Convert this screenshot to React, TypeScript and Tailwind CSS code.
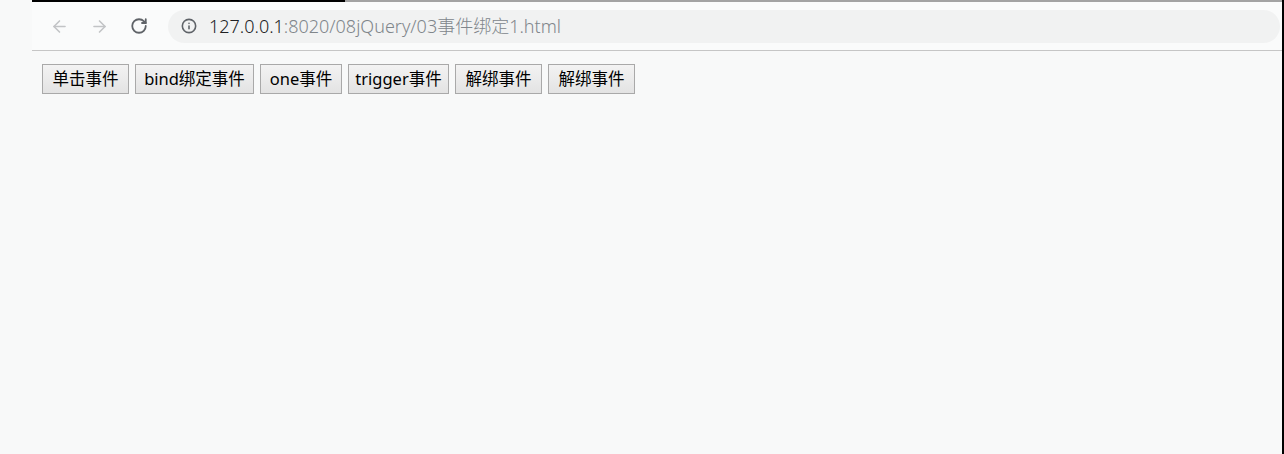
import React from "react";
import { ArrowLeft, ArrowRight, RotateCw, Info } from "lucide-react";

const buttons = [
  { label: "单击事件", w: "w-[87px]" },
  { label: "bind绑定事件", w: "w-[119px]" },
  { label: "one事件", w: "w-[82px]" },
  { label: "trigger事件", w: "w-[101px]" },
  { label: "解绑事件", w: "w-[87px]" },
  { label: "解绑事件", w: "w-[87px]" },
];

export default function App() {
  return (
    <div className="flex h-[454px] w-[1284px] overflow-hidden bg-[#f8f9f9] font-['Noto_Sans','Noto_Sans_CJK_SC',sans-serif]">
      <div className="w-[32px] shrink-0" />
      <div className="flex flex-1 flex-col">
        {/* tab strip edge */}
        <div className="flex h-[2px]">
          <div className="w-[313px] bg-black" />
          <div className="flex-1 bg-[#a3a3a3]" />
        </div>
        {/* toolbar */}
        <div className="flex h-[49px] items-center border-b border-[#c6c6c6] bg-[#fafbfb]">
          <div className="flex w-[136px] items-center pl-[18px]">
            <ArrowLeft size={19} strokeWidth={2} className="text-[#c2c4c6]" />
            <div className="w-[21px]" />
            <ArrowRight size={19} strokeWidth={2} className="text-[#c2c4c6]" />
            <div className="w-[21px]" />
            <RotateCw size={18} strokeWidth={2.4} className="text-[#5f6368]" />
          </div>
          <div className="mr-[2px] flex h-[33px] flex-1 items-center rounded-full bg-[#f1f2f2] pl-[13px]">
            <Info size={16} strokeWidth={2.4} className="text-[#5f6368]" />
            <span className="ml-[12px] text-[18px] font-light text-[#202124]">
              127.0.0.1<span className="text-[#80868b]">:8020/08jQuery/03事件绑定1.html</span>
            </span>
          </div>
        </div>
        {/* page */}
        <div className="flex-1 pl-[10px] pt-[13px]">
          <div className="flex gap-[6px]">
            {buttons.map((b, i) => (
              <button
                key={i}
                className={`${b.w} h-[30px] border border-[#a9a9a9] bg-gradient-to-b from-[#f3f3f3] to-[#e3e3e3] text-center text-[16.5px] leading-none text-black`}
              >
                {b.label}
              </button>
            ))}
          </div>
        </div>
      </div>
      <div className="w-[2px] shrink-0 bg-black" />
    </div>
  );
}
